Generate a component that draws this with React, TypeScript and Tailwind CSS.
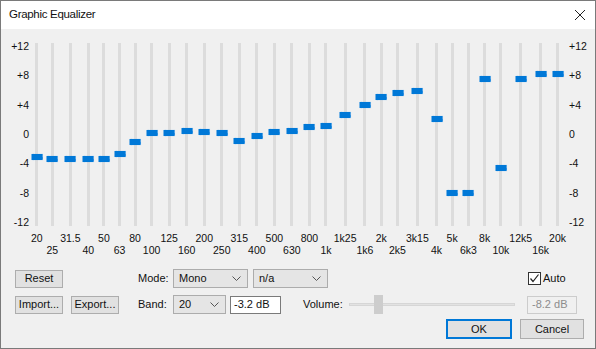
import React from 'react';

type Band = { label: string; value: number };

const bands: Band[] = [
  { label: '20', value: -3.2 },
  { label: '25', value: -3.45 },
  { label: '31.5', value: -3.45 },
  { label: '40', value: -3.45 },
  { label: '50', value: -3.45 },
  { label: '63', value: -2.7 },
  { label: '80', value: -1.05 },
  { label: '100', value: 0.2 },
  { label: '125', value: 0.2 },
  { label: '160', value: 0.45 },
  { label: '200', value: 0.23 },
  { label: '250', value: 0.1 },
  { label: '315', value: -1.0 },
  { label: '400', value: -0.27 },
  { label: '500', value: 0.3 },
  { label: '630', value: 0.45 },
  { label: '800', value: 0.9 },
  { label: '1k', value: 1.05 },
  { label: '1k25', value: 2.6 },
  { label: '1k6', value: 3.95 },
  { label: '2k', value: 5.1 },
  { label: '2k5', value: 5.6 },
  { label: '3k15', value: 5.85 },
  { label: '4k', value: 2.0 },
  { label: '5k', value: -8.0 },
  { label: '6k3', value: -8.0 },
  { label: '8k', value: 7.45 },
  { label: '10k', value: -4.7 },
  { label: '12k5', value: 7.45 },
  { label: '16k', value: 8.2 },
  { label: '20k', value: 8.2 },
];

const axis = ['+12', '+8', '+4', '0', '-4', '-8', '-12'];

// 24 dB spread over 176px of travel
const thumbTop = (v: number) => ((12 - v) * 176) / 24;

const Chevron = () => (
  <svg width="9" height="5" viewBox="0 0 9 5" className="shrink-0">
    <polyline points="0.5,0.5 4.5,4.5 8.5,0.5" fill="none" stroke="#555" strokeWidth="1" />
  </svg>
);

const Combo: React.FC<{ value: string; width: string }> = ({ value, width }) => (
  <div
    className={`${width} h-[19px] flex items-center justify-between pl-[5px] pr-[6px] bg-[#e5e5e5] border border-[#acacac]`}
  >
    <span>{value}</span>
    <Chevron />
  </div>
);

const Button: React.FC<{ label: string; width: string; primary?: boolean }> = ({
  label,
  width,
  primary,
}) => (
  <div
    className={`${width} flex items-center justify-center bg-[#e1e1e1] ${
      primary ? 'h-[20px] border-2 border-[#0078d7]' : 'h-[18px] border border-[#adadad]'
    }`}
  >
    {label}
  </div>
);

export default function App() {
  return (
    <div className="w-[596px] h-[349px] flex flex-col bg-[#f0f0f0] border border-[#7a7a7a] overflow-hidden text-[11px] text-[#111] font-['Liberation_Sans',Arial,sans-serif]">
      {/* title bar */}
      <div className="h-[28px] shrink-0 bg-white flex items-center justify-between pl-[8px] pr-[9px]">
        <span className="text-[11.5px] tracking-[-0.3px]">Graphic Equalizer</span>
        <svg width="12" height="12" viewBox="0 0 12 12">
          <path d="M1 1 L11 11 M11 1 L1 11" stroke="#222" strokeWidth="1" />
        </svg>
      </div>

      {/* sliders */}
      <div className="flex pt-[14px] text-[10.5px]">
        <div className="w-[28px] -mt-[3px] h-[188px] flex flex-col justify-between items-end leading-[12px]">
          {axis.map((a) => (
            <span key={a}>{a}</span>
          ))}
        </div>

        <div className="w-[537px] grid grid-cols-[repeat(31,1fr)]">
          {bands.map((b, i) => (
            <div key={b.label} className="flex flex-col items-center">
              <div className="relative w-[3px] h-[183px] bg-[#dcdcdc]">
                <div
                  className="absolute left-1/2 -translate-x-1/2 w-[11px] h-[6px] bg-[#0078d7] shadow-[0_0_1px_#5aa8ea]"
                  style={{ top: thumbTop(b.value) }}
                />
              </div>
              <div className="mt-[6px] h-[12px] leading-[12px] whitespace-nowrap">
                {i % 2 === 0 ? b.label : ''}
              </div>
              <div className="h-[12px] leading-[12px] whitespace-nowrap">
                {i % 2 === 1 ? b.label : ''}
              </div>
            </div>
          ))}
        </div>

        <div className="pl-[3px] -mt-[3px] h-[188px] flex flex-col justify-between items-start leading-[12px]">
          {axis.map((a) => (
            <span key={a}>{a}</span>
          ))}
        </div>
      </div>

      {/* controls */}
      <div className="flex items-center pl-[14px] mt-[13px] h-[19px]">
        <Button label="Reset" width="w-[48px]" />
        <span className="ml-[75px] w-[35px]">Mode:</span>
        <Combo value="Mono" width="w-[75px]" />
        <div className="ml-[5px]">
          <Combo value="n/a" width="w-[75px]" />
        </div>
        <div className="ml-[200px] flex items-center gap-[2px]">
          <div className="w-[13px] h-[13px] bg-white border border-[#333] flex items-center justify-center">
            <svg width="11" height="11" viewBox="0 0 11 11">
              <polyline points="1.5,5.5 4,8.5 9.5,1.5" fill="none" stroke="#222" strokeWidth="1.2" />
            </svg>
          </div>
          <span>Auto</span>
        </div>
      </div>

      <div className="flex items-center pl-[14px] mt-[7px] h-[19px]">
        <Button label="Import..." width="w-[48px]" />
        <div className="ml-[8px]">
          <Button label="Export..." width="w-[48px]" />
        </div>
        <span className="ml-[19px] w-[35px]">Band:</span>
        <Combo value="20" width="w-[53px]" />
        <div className="ml-[4px] w-[51px] h-[18px] bg-white border border-[#7a7a7a] flex items-center pl-[3px]">
          -3.2 dB
        </div>
        <span className="ml-[22px] w-[46px]">Volume:</span>
        <div className="relative w-[166px] h-[19px] flex items-center">
          <div className="w-full h-[3px] bg-[#e2e2e2] border border-[#d6d6d6]" />
          <div className="absolute left-[25px] top-0 w-[9px] h-[19px] bg-[#cdcdcd]" />
        </div>
        <div className="ml-[12px] w-[50px] h-[18px] border border-[#cccccc] flex items-center pl-[4px] text-[#8c8c8c]">
          -8.2 dB
        </div>
      </div>

      <div className="flex justify-end items-center gap-[8px] pr-[11px] mt-[5px]">
        <Button label="OK" width="w-[66px]" primary />
        <div className="w-[64px] h-[20px] flex items-center justify-center bg-[#e1e1e1] border border-[#adadad]">
          Cancel
        </div>
      </div>
    </div>
  );
}
